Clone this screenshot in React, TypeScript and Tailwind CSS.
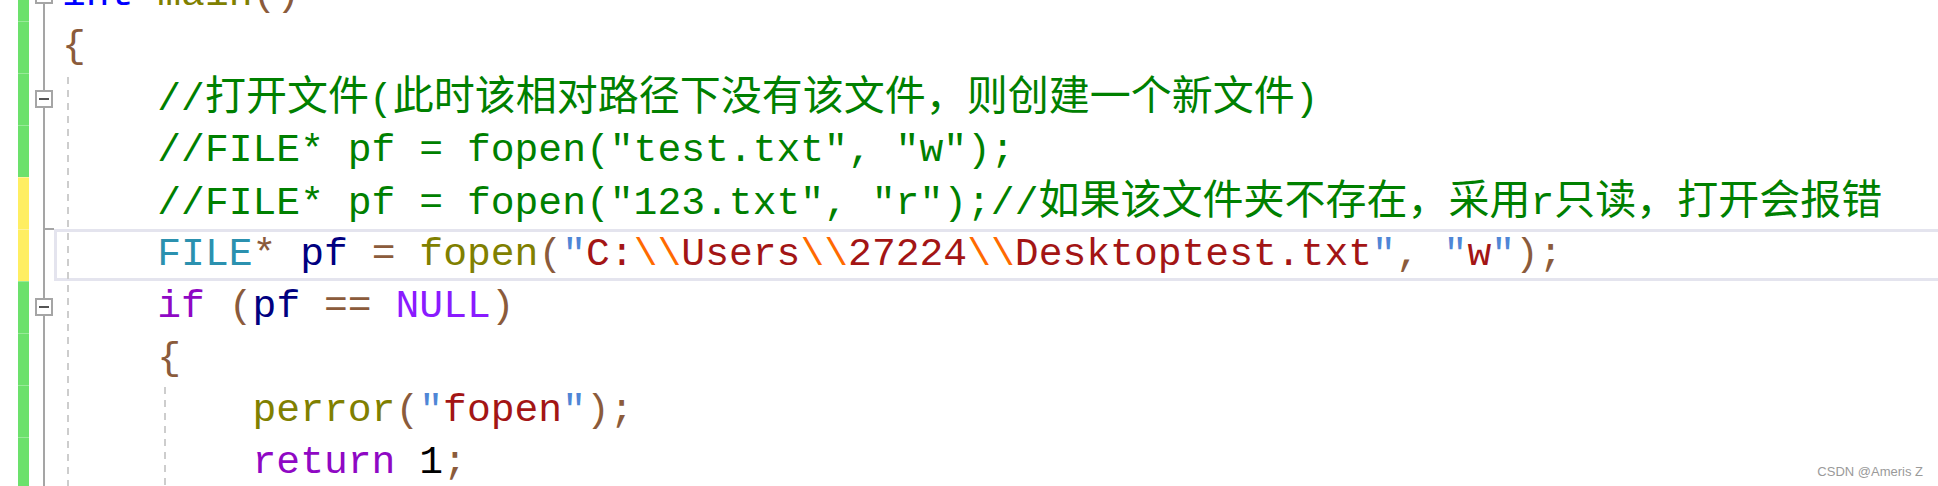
type Tok = [string, keyof typeof tone];
type Fold = "none" | "box" | "line" | "end";
type Line = { bar: "green" | "yellow"; fold: Fold; toks: Tok[]; current?: boolean };

const tone = {
  kw: "text-[#0000ff]",
  fn: "text-[#808000]",
  op: "text-[#8b5b3b]",
  cm: "text-[#008000]",
  ty: "text-[#2b91af]",
  va: "text-[#000080]",
  st: "text-[#a31515]",
  es: "text-[#ff6a00]",
  qt: "text-[#4f86d6]",
  ct: "text-[#8f08c4]",
  mc: "text-[#8a1bff]",
  nm: "text-black",
  sp: "",
};

const lines: Line[] = [
  { bar: "green", fold: "box", toks: [["int", "kw"], [" ", "sp"], ["main", "fn"], ["()", "op"]] },
  { bar: "green", fold: "line", toks: [["{", "op"]] },
  { bar: "green", fold: "box", toks: [["    //打开文件(此时该相对路径下没有该文件，则创建一个新文件)", "cm"]] },
  { bar: "green", fold: "line", toks: [['    //FILE* pf = fopen("test.txt", "w");', "cm"]] },
  {
    bar: "yellow",
    fold: "end",
    toks: [['    //FILE* pf = fopen("123.txt", "r");//如果该文件夹不存在，采用r只读，打开会报错', "cm"]],
  },
  {
    bar: "yellow",
    fold: "line",
    current: true,
    toks: [
      ["    ", "sp"], ["FILE", "ty"], ["*", "op"], [" ", "sp"], ["pf", "va"], [" ", "sp"], ["=", "op"],
      [" ", "sp"], ["fopen", "fn"], ["(", "op"], ['"', "qt"], ["C:", "st"], ["\\\\", "es"],
      ["Users", "st"], ["\\\\", "es"], ["27224", "st"], ["\\\\", "es"], ["Desktoptest.txt", "st"],
      ['"', "qt"], [",", "op"], [" ", "sp"], ['"', "qt"], ["w", "st"], ['"', "qt"], [")", "op"], [";", "op"],
    ],
  },
  {
    bar: "green",
    fold: "box",
    toks: [["    ", "sp"], ["if", "ct"], [" ", "sp"], ["(", "op"], ["pf", "va"], [" ", "sp"], ["==", "op"], [" ", "sp"], ["NULL", "mc"], [")", "op"]],
  },
  { bar: "green", fold: "line", toks: [["    ", "sp"], ["{", "op"]] },
  {
    bar: "green",
    fold: "line",
    toks: [["        ", "sp"], ["perror", "fn"], ["(", "op"], ['"', "qt"], ["fopen", "st"], ['"', "qt"], [")", "op"], [";", "op"]],
  },
  { bar: "green", fold: "line", toks: [["        ", "sp"], ["return", "ct"], [" ", "sp"], ["1", "nm"], [";", "op"]] },
];

function Text({ s }: { s: string }) {
  const parts = s.split(/([\u3000-\u9fff\uff00-\uffef]+)/);
  return (
    <>
      {parts.map((p, i) =>
        i % 2 === 1 ? (
          <span key={i} className="text-[41px]">
            {p}
          </span>
        ) : (
          p
        ),
      )}
    </>
  );
}

function FoldBox() {
  return (
    <div className="flex h-[18px] w-[18px] shrink-0 items-center justify-center border-2 border-[#a5a5a5] bg-white">
      <div className="h-[2px] w-[10px] bg-[#555]" />
    </div>
  );
}

function FoldCol({ fold }: { fold: Fold }) {
  return (
    <div className="relative flex h-full w-[20px] shrink-0 flex-col items-center">
      {fold === "box" ? (
        <>
          <div className="w-[2px] flex-1 bg-[#a5a5a5]" />
          <FoldBox />
          <div className="w-[2px] flex-1 bg-[#a5a5a5]" />
        </>
      ) : (
        <div className="w-[2px] flex-1 bg-[#a5a5a5]" />
      )}
      {fold === "end" && <div className="absolute bottom-[-1px] left-[10px] h-[2px] w-[10px] bg-[#a5a5a5]" />}
    </div>
  );
}

function Row({ line }: { line: Line }) {
  const bar =
    line.bar === "green" ? "bg-[#6ce16c] border-[#98ea98]" : "bg-[#ffee62] border-[#fff39a]";
  return (
    <div className="flex h-[52px]">
      <div className="w-[18px] shrink-0" />
      <div className={`w-[11px] shrink-0 border-t ${bar}`} />
      <div className="w-[5px] shrink-0" />
      <FoldCol fold={line.fold} />
      {line.current ? (
        <div className="flex-1 whitespace-pre border-y-[3px] border-l-[3px] border-[#e4e4ee] pl-[5px] leading-[46px]">
          {line.toks.map(([t, k], i) => (
            <span key={i} className={tone[k]}>
              <Text s={t} />
            </span>
          ))}
        </div>
      ) : (
        <div className="flex-1 whitespace-pre pl-[8px] leading-[52px]">
          {line.toks.map(([t, k], i) => (
            <span key={i} className={tone[k]}>
              <Text s={t} />
            </span>
          ))}
        </div>
      )}
    </div>
  );
}

export default function App() {
  return (
    <div className="relative h-[486px] w-[1938px] overflow-hidden bg-white font-['Liberation_Mono','Noto_Sans_CJK_SC',monospace] text-[39.7px]">
      <div className="relative -mt-[31px]">
        {lines.map((l, i) => (
          <Row key={i} line={l} />
        ))}
        <div className="absolute bottom-0 left-[67px] top-[108px] w-[2px] bg-[repeating-linear-gradient(to_bottom,#cdcdcd_0_7px,transparent_7px_13px)]" />
        <div className="absolute bottom-0 left-[164px] top-[418px] w-[2px] bg-[repeating-linear-gradient(to_bottom,#cdcdcd_0_7px,transparent_7px_13px)]" />
      </div>
      <div className="absolute bottom-[7px] right-[15px] font-['Liberation_Sans',Arial,sans-serif] text-[13px] leading-[15px] text-[#9a9a9a]">
        CSDN @Ameris Z
      </div>
    </div>
  );
}
